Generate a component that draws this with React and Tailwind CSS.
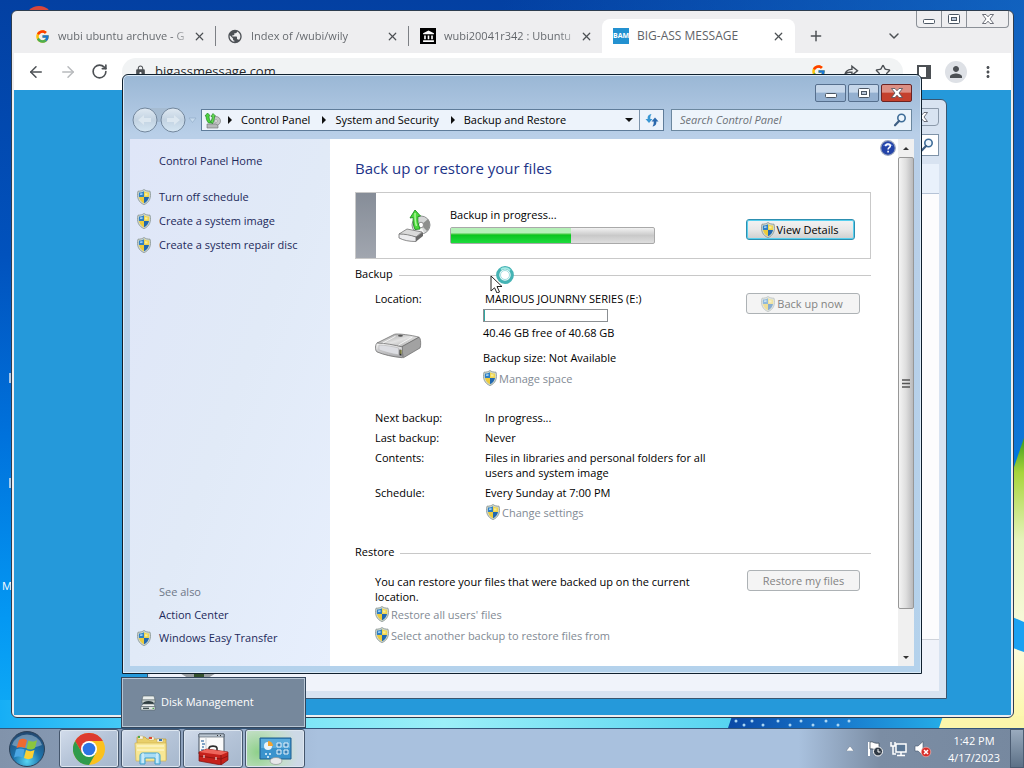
import React from 'react';
import { ArrowLeft, ArrowRight, ChevronDown, Plus, RotateCw, Star, X } from 'lucide-react';
import { MdAccountBalance, MdLock, MdMoreVert, MdPerson, MdPublic } from 'react-icons/md';
import { FcGoogle } from 'react-icons/fc';
import { RiShareForwardLine } from 'react-icons/ri';

const tabs = [
  { title: 'wubi ubuntu archuve - G', icon: <FcGoogle size={15} /> },
  { title: 'Index of /wubi/wily', icon: <MdPublic size={17} className="text-[#4d5156]" /> },
  {
    title: 'wubi20041r342 : Ubuntu',
    icon: (
      <span className="flex h-4 w-4 items-center justify-center bg-black text-white">
        <MdAccountBalance size={13} />
      </span>
    ),
  },
];

const tasks = ['Turn off schedule', 'Create a system image', 'Create a system repair disc'];

const crumbs = ['Control Panel', 'System and Security', 'Backup and Restore'];

const Shield = ({ className = '' }) => (
  <svg viewBox="0 0 14 16" className={`h-4 w-[14px] shrink-0 ${className}`}>
    <path d="M7 .5C8.500 1.700 10.500 2.200 13 2.200 13.800 5 13.700 8 12.600 10.500 11.400 13 9.500 14.600 7 15.600 4.500 14.600 2.600 13 1.400 10.500 .3 8 .2 5 1 2.200 3.500 2.200 5.500 1.700 7 .5Z" fill="#d3dbcf" stroke="#84908f" strokeWidth=".8" />
    <path d="M7 2.200V8H2C1.700 6.500 1.700 5 2 3.600 4 3.500 5.500 3.100 7 2.200Z" fill="#2f7fc4" />
    <path d="M7 2.200V8h5c.3-1.500.3-3 0-4.400C10 3.500 8.500 3.100 7 2.200Z" fill="#f0d64e" />
    <path d="M2 8h5v6.200C4.300 13 2.600 11 2 8Z" fill="#eccb3c" />
    <path d="M12 8H7v6.200C9.700 13 11.400 11 12 8Z" fill="#2168b0" />
    <path d="M3 4.500 5.500 4V6H3Z" fill="#9bcdf2" />
    <path d="M8 4.200 10.500 4.600V6.500H8Z" fill="#f8ec9b" />
  </svg>
);

const Wallpaper = () => (
  <svg className="absolute inset-0 h-full w-full" viewBox="0 0 1024 728" preserveAspectRatio="none">
    <defs>
      <linearGradient id="sky" x1="0" y1="0" x2="0" y2="1">
        <stop offset="0" stopColor="#0340a2" />
        <stop offset=".35" stopColor="#0152bd" />
        <stop offset=".6" stopColor="#0072dc" />
        <stop offset=".85" stopColor="#0498f3" />
        <stop offset="1" stopColor="#10acf6" />
      </linearGradient>
      <linearGradient id="glow" x1="0" y1="0" x2="1" y2="0">
        <stop offset="0" stopColor="#16aef5" />
        <stop offset=".3" stopColor="#6ce0f6" />
        <stop offset=".6" stopColor="#9beff8" />
        <stop offset="1" stopColor="#54d3f0" />
      </linearGradient>
      <linearGradient id="leaf" x1="0" y1="0" x2="0" y2="1">
        <stop offset="0" stopColor="#3f9c1d" />
        <stop offset=".12" stopColor="#a7d53c" />
        <stop offset=".35" stopColor="#e6f3bb" />
        <stop offset=".7" stopColor="#fbfbe0" />
        <stop offset="1" stopColor="#fdf7a5" />
      </linearGradient>
      <linearGradient id="band" x1="0" y1="0" x2="1" y2="0">
        <stop offset="0" stopColor="#0a49a6" />
        <stop offset=".5" stopColor="#1878cc" />
        <stop offset="1" stopColor="#25aee8" />
      </linearGradient>
      <linearGradient id="edge" x1="0" y1="0" x2="1" y2="0">
        <stop offset="0" stopColor="#1a78d2" stopOpacity="0" />
        <stop offset="1" stopColor="#1a78d2" stopOpacity=".6" />
      </linearGradient>
    </defs>
    <rect width="1024" height="728" fill="url(#sky)" />
    <rect x="500" y="0" width="524" height="450" fill="url(#edge)" />
    <rect y="700" width="740" height="28" fill="url(#glow)" />
    <path d="M732 716H946L940 728H728Z" fill="url(#band)" />
    {[736, 744, 752, 763, 778, 790, 801, 813, 826, 838, 849].map((x, i) => (
      <circle key={x} cx={x} cy={i % 2 ? 725 : 721} r="1.500" fill="#a9d5f4" />
    ))}
    <path d="M1024 438 1013 470 1000 728H1024Z" fill="url(#leaf)" />
    <path d="M943 716H1024V728H939Z" fill="#fbf6ab" />
    <path d="M1010 616 1024 622V652L1010 647Z" fill="#1ba1f2" />
    <circle cx="39" cy="20" r="14" fill="#d9473c" />
    <path d="M10 373v10M10 478v10" stroke="#dbe6f2" strokeWidth="1.500" />
  </svg>
);

const MinimizeGlyph = () => (
  <svg viewBox="0 0 14 12" className="h-3 w-[14px]">
    <rect x="1.500" y="6.500" width="11" height="4" rx="1" fill="#fff" stroke="#4b5663" />
  </svg>
);

const MaximizeGlyph = () => (
  <svg viewBox="0 0 14 12" className="h-3 w-[14px]">
    <rect x="1.500" y="1.500" width="11" height="9" rx="1" fill="#fff" stroke="#4b5663" />
    <rect x="4.500" y="4.500" width="5" height="3" fill="#b9c6d8" stroke="#4b5663" />
  </svg>
);

const CloseGlyph = () => (
  <svg viewBox="0 0 14 12" className="h-3 w-[14px]">
    <path
      d="M1.500 1.500H5L7 3.800 9 1.500h3.500L9 6l3.500 4.500H9L7 8.200 5 10.500H1.500L5 6Z"
      fill="#fff"
      stroke="#4b4f5a"
      strokeWidth=".8"
    />
  </svg>
);

const ChromeWindow = () => (
  <section className="absolute bottom-[10px] left-[11px] right-[10px] top-[10px] flex flex-col rounded-md border border-[#2d3d50] bg-[#eeeef0] px-[2px] pb-[2px]">
    <header className="flex h-[42px] shrink-0 items-end">
      <div className="flex h-[34px] min-w-0 flex-1 items-stretch pl-[9px]">
        {tabs.map((tab, index) => (
          <div key={tab.title} className="flex w-[193px] items-center">
            <div className={`flex h-5 w-full items-center pl-[11px] pr-[9px] ${index < 2 ? 'border-r border-[#7d8085]' : ''}`}>
              <span className="flex w-4 shrink-0 justify-center">{tab.icon}</span>
              <span className="ml-2 flex-1 whitespace-nowrap bg-gradient-to-r from-[#5f6368] from-85% to-transparent bg-clip-text text-transparent">
                {tab.title}
              </span>
              <button aria-label="Close tab" className="text-[#4c5054]">
                <X size={13} strokeWidth={2.2} />
              </button>
            </div>
          </div>
        ))}
        <div className="flex w-[193px] items-center rounded-t-lg bg-white pl-[11px] pr-[10px]">
          <span className="flex h-4 w-4 items-center justify-center bg-[#2391d0] text-[7px] font-bold text-white">BAM</span>
          <span className="ml-2 flex-1 whitespace-nowrap text-xs text-[#5f6368]">BIG-ASS MESSAGE</span>
          <button aria-label="Close tab" className="text-[#4c5054]">
            <X size={13} strokeWidth={2.2} />
          </button>
        </div>
        <button aria-label="New tab" className="ml-[13px] text-[#4c5054]">
          <Plus size={16} strokeWidth={2.2} />
        </button>
      </div>
      <button aria-label="Search tabs" className="mr-[109px] flex h-[34px] items-center text-[#4c5054]">
        <ChevronDown size={16} strokeWidth={2.2} />
      </button>
      <div className="absolute right-1 top-0 flex h-[17px] rounded-b border border-t-0 border-[#8b9097]">
        <button aria-label="Minimize" className="flex w-[25px] items-center justify-center border-r border-[#8b9097]"><MinimizeGlyph /></button>
        <button aria-label="Maximize" className="flex w-[25px] items-center justify-center border-r border-[#8b9097]"><MaximizeGlyph /></button>
        <button aria-label="Close" className="flex w-[41px] items-center justify-center"><CloseGlyph /></button>
      </div>
    </header>
    <nav className="flex h-[37px] shrink-0 items-center bg-white text-[#4c5054]">
      <button aria-label="Back" className="ml-[13px]"><ArrowLeft size={18} /></button>
      <button aria-label="Forward" className="ml-[14px] text-[#b8babd]"><ArrowRight size={18} /></button>
      <button aria-label="Reload" className="ml-[14px]"><RotateCw size={17} strokeWidth={2.3} /></button>
      <div className="ml-[14px] flex h-7 flex-1 items-center rounded-full bg-[#f1f3f4] pl-3 pr-3">
        <MdLock size={13} />
        <input aria-label="Address" defaultValue="bigassmessage.com" className="ml-2 min-w-0 flex-1 bg-transparent text-[13px] text-[#26292d] outline-none" />
        <FcGoogle size={15} />
        <RiShareForwardLine size={17} className="ml-4" />
        <Star size={16} className="ml-4" />
      </div>
      <svg viewBox="0 0 14 14" className="ml-[14px] h-[14px] w-[14px]">
        <path d="M1 1H13V13H1Z" fill="#fff" stroke="#4c5054" strokeWidth="2" />
        <path d="M9 1h4v12H9Z" fill="#4c5054" />
      </svg>
      <span className="ml-[14px] flex h-[22px] w-[22px] items-center justify-center rounded-full bg-[#dee1e6]">
        <MdPerson size={18} />
      </span>
      <button aria-label="Menu" className="ml-3 mr-[14px]"><MdMoreVert size={18} /></button>
    </nav>
    <div className="flex-1 bg-[#2599da]" />
  </section>
);

const SearchGlyph = () => (
  <svg viewBox="0 0 14 14" className="h-[14px] w-[14px] shrink-0">
    <circle cx="8.500" cy="5" r="3.700" fill="#eef6fd" stroke="#3f6d98" strokeWidth="1.600" />
    <path d="M6 8 2 12.300" stroke="#3f5f84" strokeWidth="2.200" strokeLinecap="round" />
  </svg>
);

const BackWindow = () => (
  <section className="absolute bottom-[29px] left-[147px] right-[77px] top-[99px] flex flex-col rounded-t-md border border-[#3a5670] bg-[#d8e3f1] pb-[7px] pl-[2px] pr-[7px]">
    <div className="mt-2 flex h-[18px] shrink-0 justify-end">
      <span className="flex w-12 items-center justify-end rounded-b border border-[#8b99aa] pr-[9px]"><CloseGlyph /></span>
    </div>
    <div className="mt-2 flex h-[22px] shrink-0 justify-end">
      <span className="flex w-60 items-center justify-end border border-[#7f93a8] bg-white pr-1"><SearchGlyph /></span>
    </div>
    <div className="mt-2 h-[30px] shrink-0 border-b border-[#b5c3d6] bg-[#e9f1fb]" />
    <div className="flex-1 bg-[#fcfcfd]" />
    <div className="h-[52px] shrink-0 border-t border-[#cfd3da] bg-[#f0f3fa]">
      <svg viewBox="0 0 40 46" className="ml-7 h-[46px] w-10">
        <path d="M0 32h40L30 38H10Z" fill="#9a9fa2" />
        <path d="M16 33h10v4H16Z" fill="#33502d" />
      </svg>
    </div>
  </section>
);

const NavOrbs = () => (
  <svg viewBox="0 0 66 26" className="h-[26px] w-[66px] shrink-0">
    <defs>
      <linearGradient id="orb" x1="0" y1="0" x2="0" y2="1">
        <stop offset="0" stopColor="#dfe9f2" />
        <stop offset=".5" stopColor="#c3d3e2" />
        <stop offset="1" stopColor="#d5e6f3" />
      </linearGradient>
    </defs>
    <rect x="8" y="1" width="40" height="14" fill="#a6bcd2" />
    <circle cx="13" cy="13" r="12" fill="url(#orb)" stroke="#73879d" />
    <circle cx="41" cy="13" r="12" fill="url(#orb)" stroke="#73879d" />
    <path d="m6 13 6-5v3h7v4h-7v3ZM48 13l-6-5v3h-7v4h7v3Z" fill="#dce7f0" />
    <path d="M57 11h7l-3.500 4.500Z" fill="#c6dbee" stroke="#94aec8" strokeWidth=".7" />
  </svg>
);

const Drive = ({ className = '' }) => (
  <svg viewBox="0 0 48 28" className={className}>
    <defs>
      <linearGradient id="drive" x1="0" y1="0" x2="1" y2="1">
        <stop offset="0" stopColor="#8c8c8c" />
        <stop offset=".5" stopColor="#e2e2e2" />
        <stop offset="1" stopColor="#9d9d9d" />
      </linearGradient>
      <linearGradient id="driveFront" x1="0" y1="0" x2="0" y2="1">
        <stop offset="0" stopColor="#f6f6f6" />
        <stop offset="1" stopColor="#a5a5a8" />
      </linearGradient>
    </defs>
    <path d="M2 11 20 2c3-1 18 1 25 3l-18 10Z" fill="url(#drive)" stroke="#777" strokeWidth=".8" />
    <path d="M27 15 45 5c2 1 2 9 1 11L29 26Z" fill="#a2a2a2" stroke="#666" strokeWidth=".7" />
    <path d="M2 11c8 0 18 2 26 4v11C18 25 9 23 2 20-.500 18 .500 12 2 11Z" fill="url(#driveFront)" stroke="#707070" strokeWidth=".8" />
    <path d="M4 13c6 0 14 1.500 20 3v7c-7-1-14-3-20-5Z" fill="#dcdde2" stroke="#aaa" strokeWidth=".5" />
    <path d="M25 17.500 27 18v6l-2-.5Z" fill="#2c2c2c" />
    <path d="M26.500 18v4" stroke="#b6b94c" />
    <path d="M8 11 21 4M38 5 24 13" stroke="#f8f8f8" strokeWidth=".9" />
    <ellipse cx="26" cy="3.500" rx="2.500" ry="1" fill="#555" />
  </svg>
);

const BackupDisc = ({ className = '' }) => (
  <svg viewBox="0 0 34 34" className={className}>
    <ellipse cx="23" cy="16" rx="9" ry="9" fill="#d4d6d6" stroke="#8e9091" />
    <path d="M23 16 30 10c3 4 2 9-1 12Z" fill="#8d8f8d" />
    <path d="M23 16 17 23c2 2 6 3 9 1Z" fill="#f3f3f3" />
    <ellipse cx="23" cy="16" rx="2.500" ry="2.800" fill="#fff" stroke="#8c8c8c" />
    <path d="M1 25 9 20l15 3-6 5Z" fill="#dadada" stroke="#777" strokeWidth=".8" />
    <path d="M1 25c6 0 11 1 17 3v4.500c-7 0-12-1-17-3.500Z" fill="#ececee" stroke="#707070" strokeWidth=".8" />
    <path d="m18 28 7-5v4l-7 5.500Z" fill="#686868" />
    <path d="M17 1 22.500 7 20 7.500C19.500 12 20 15 22 20l-5 .5C15 16 15 12 15.200 8.500L12 9Z" fill="#4bd93b" stroke="#1f8d22" strokeWidth=".9" />
    <path d="M17 4c0 5 0 9 1.500 13" fill="none" stroke="#adf79a" strokeWidth="1.500" />
  </svg>
);

const BackupSmall = ({ className = '' }) => (
  <svg viewBox="0 0 17 17" className={className}>
    <circle cx="12" cy="9" r="4.500" fill="#c3c5c6" stroke="#7d7f80" strokeWidth=".7" />
    <circle cx="12" cy="9" r="1.300" fill="#fff" stroke="#777" strokeWidth=".5" />
    <path d="M3 12h9l2 1.500V16H3Z" fill="#b4b7b8" stroke="#6d6f70" strokeWidth=".6" />
    <path d="M3.500 1 6 3.500 5 4c0 3 1 5 3 7H4.500C2.500 8.500 2 6.500 2.200 4.300L1 4Z" fill="#4cd33d" stroke="#22862a" strokeWidth=".7" />
    <path d="M9 1.500 11.500 4l-1 .3c0 2.500-.5 5-2 7.200L6.500 10c1.500-2 1.800-3.500 1.700-5.500L7 4.500Z" fill="#63dc50" stroke="#22862a" strokeWidth=".7" />
  </svg>
);

const Section = ({ title, children }) => (
  <fieldset>
    <legend className="flex w-full items-center gap-[6px] leading-4">
      {title}
      <span className="mt-[2px] h-px flex-1 bg-[#c8c8c8]" />
    </legend>
    {children}
  </fieldset>
);

const TaskLink = ({ children, className = '' }) => (
  <a href="#" className={`flex h-4 items-center text-[#828a94] ${className}`}>
    <Shield className="mr-[2px]" />
    {children}
  </a>
);

const DisabledButton = ({ children, className = '' }) => (
  <button disabled className={`flex h-[21px] items-center justify-center rounded-[3px] border border-[#adb2b5] bg-[#f4f4f4] text-[#838383] ${className}`}>
    {children}
  </button>
);

const Row = ({ label, children }) => (
  <div className="flex">
    <dt className="w-[110px] shrink-0">{label}</dt>
    <dd className="max-w-[240px]">{children}</dd>
  </div>
);

const Sidebar = () => (
  <aside className="flex w-[200px] shrink-0 flex-col bg-gradient-to-br from-[#dfe6f8] via-[#e1eaf7] to-[#e7effd] pb-5 text-[#1d2a5b]">
    <a href="#" className="ml-[29px] mt-[14px] leading-4">Control Panel Home</a>
    <ul className="mt-5 flex flex-col gap-2">
      {tasks.map((task) => (
        <li key={task}>
          <a href="#" className="flex h-4 items-center gap-2 pl-[7px]">
            <Shield />
            {task}
          </a>
        </li>
      ))}
    </ul>
    <div className="mt-auto flex flex-col gap-[7px]">
      <span className="ml-[29px] h-4 leading-4 text-[#6e7888]">See also</span>
      <a href="#" className="ml-[29px] h-4 leading-4">Action Center</a>
      <a href="#" className="flex h-4 items-center gap-2 pl-[7px]">
        <Shield />
        Windows Easy Transfer
      </a>
    </div>
  </aside>
);

const Scrollbar = () => (
  <div className="flex w-4 shrink-0 flex-col bg-[#f0f0f0]">
    <button aria-label="Scroll up" className="flex h-[18px] items-center justify-center">
      <svg viewBox="0 0 8 4" className="h-1 w-2"><path d="M1 4h6L4 1Z" fill="#333" /></svg>
    </button>
    <div className="flex flex-1 items-center justify-center rounded-[2px] border border-[#979797] bg-gradient-to-r from-[#f4f4f4] via-[#dedede] to-[#b9b9bb]">
      <svg viewBox="0 0 8 9" className="h-[9px] w-2">
        <path d="M0 1h8M0 4.500h8M0 8h8" stroke="#555" strokeWidth="1.300" />
      </svg>
    </div>
    <div className="h-10 shrink-0" />
    <button aria-label="Scroll down" className="flex h-[17px] items-center justify-center">
      <svg viewBox="0 0 8 4" className="h-1 w-2"><path d="M1 0h6L4 3Z" fill="#333" /></svg>
    </button>
  </div>
);

const BackupContent = () => (
  <main className="min-w-0 flex-1 bg-white pl-[25px] pr-[27px] pt-[17px] leading-[15px] text-black">
    <h1 className="text-[15px] leading-6 text-[#1c3388]">Back up or restore your files</h1>

    <div className="mt-3 flex h-[67px] items-center border border-[#c9c9c9]">
      <div className="h-full w-5 bg-gradient-to-b from-[#868d98] to-[#a1a6af]" />
      <BackupDisc className="ml-[22px] h-[34px] w-[34px]" />
      <div className="ml-[18px]">
        <div id="backup-state" className="leading-4">Backup in progress...</div>
        <div
          role="progressbar"
          aria-labelledby="backup-state"
          className="mt-1 h-[17px] w-[205px] rounded-[2px] border border-[#a9a9a9] bg-gradient-to-b from-[#f2f2f2] via-[#c9c9c9] to-[#dedede]"
        >
          <div className="h-full w-[59%] bg-gradient-to-b from-[#b5f0b8] from-30% via-[#08c41c] via-45% to-[#1cdc3c]" />
        </div>
      </div>
      <button className="ml-auto mr-[15px] mt-2 flex h-[21px] w-[109px] items-center justify-center rounded-[3px] border border-[#2d8fb0] bg-gradient-to-b from-[#f3f3f3] via-[#e8e8e8] to-[#cfcfcf] pr-[2px] shadow-[inset_0_0_0_1px_#58cfee]">
        <Shield className="mr-[2px]" />
        View Details
      </button>
    </div>

    <div className="mt-[7px]">
      <Section title="Backup">
        <div className="flex items-start pl-5 pt-[9px]">
          <div className="w-[108px] shrink-0">
            Location:
            <Drive className="mt-[26px] h-7 w-[47px]" />
          </div>
          <div>
            <div className="pl-[2px]">MARIOUS JOUNRNY SERIES (E:)</div>
            <div className="mt-[3px] flex h-[13px] w-[125px] border border-[#8b8f92]">
              <div className="w-px bg-[#2fa7a2]" />
            </div>
            <div className="mt-[3px]">40.46 GB free of 40.68 GB</div>
            <div className="mt-[10px]">Backup size: Not Available</div>
            <TaskLink className="mt-[5px]">Manage space</TaskLink>
          </div>
          <DisabledButton className="ml-auto mr-[11px] mt-[2px] w-[114px] pr-[2px]">
            <Shield className="mr-[2px] opacity-50" />
            Back up now
          </DisabledButton>
        </div>
        <dl className="flex flex-col gap-[5px] pl-5 pt-6">
          <Row label="Next backup:">In progress...</Row>
          <Row label="Last backup:">Never</Row>
          <Row label="Contents:">Files in libraries and personal folders for all users and system image</Row>
          <Row label="Schedule:">Every Sunday at 7:00 PM</Row>
        </dl>
        <TaskLink className="ml-[131px] mt-1">Change settings</TaskLink>
      </Section>
    </div>

    <div className="mt-6">
      <Section title="Restore">
        <div className="flex items-start pl-5 pt-[10px]">
          <div className="mt-1">
            <p className="max-w-[340px]">You can restore your files that were backed up on the current location.</p>
            <TaskLink className="mt-[2px]">Restore all users&#39; files</TaskLink>
            <TaskLink className="mt-[5px]">Select another backup to restore files from</TaskLink>
          </div>
          <DisabledButton className="ml-auto mr-[11px] w-[113px] shrink-0">Restore my files</DisabledButton>
        </div>
      </Section>
    </div>
  </main>
);

const BackupWindow = () => (
  <section className="absolute bottom-[54px] left-[122px] right-[102px] top-[74px] flex flex-col rounded-t-md border border-[#10202e] bg-gradient-to-b from-[#9ab7d5] via-[#b9cfe8] via-10% to-[#b4d2ec] px-[7px] pb-[7px] shadow-[inset_0_0_0_1px_#dcebf8]">
    <header className="mt-[9px] flex h-[18px] shrink-0 justify-end gap-[2px] pr-[2px]">
      <button aria-label="Minimize" className="flex w-[31px] items-center justify-center rounded-[2px] border border-[#566f8d] bg-gradient-to-b from-[#c6d7ea] from-45% to-[#94b0d0] to-50%"><MinimizeGlyph /></button>
      <button aria-label="Maximize" className="flex w-[31px] items-center justify-center rounded-[2px] border border-[#566f8d] bg-gradient-to-b from-[#c6d7ea] from-45% to-[#94b0d0] to-50%"><MaximizeGlyph /></button>
      <button aria-label="Close" className="flex w-[31px] items-center justify-center rounded-[2px] border border-[#6b2323] bg-gradient-to-b from-[#dc8f84] from-45% to-[#c4402d] to-50%"><CloseGlyph /></button>
    </header>
    <div className="mb-[5px] mt-1 flex h-7 shrink-0 items-center px-[2px]">
      <NavOrbs />
      <nav className="ml-[3px] flex h-[22px] min-w-0 flex-1 items-center border border-[#5f7c9a] bg-[#edf3fb] text-black">
        <BackupSmall className="ml-[2px] h-[17px] w-[17px]" />
        {crumbs.map((crumb) => (
          <React.Fragment key={crumb}>
            <svg viewBox="0 0 4 8" className="ml-[7px] mr-[9px] h-2 w-1"><path d="M0 0 4 4 0 8Z" fill="#111" /></svg>
            <button className="mr-[5px] whitespace-nowrap">{crumb}</button>
          </React.Fragment>
        ))}
        <button aria-label="Previous locations" className="ml-auto mr-[6px]">
          <svg viewBox="0 0 8 4" className="h-1 w-2"><path d="M0 0h8L4 4Z" fill="#111" /></svg>
        </button>
        <button aria-label="Refresh" className="flex h-full w-6 items-center justify-center border-l border-[#7c93ab]">
          <svg viewBox="0 0 14 14" className="h-[14px] w-[14px]">
            <path d="M6.500 1C3 1.500 2.500 3.500 2.700 6H.5L4 10 7.500 6H5.300C5.200 4 5.500 2.500 6.500 1Z" fill="#3a97d3" />
            <path d="M7.500 13.500C11 13 11.500 11 11.300 8.500h2.200L10 4.500 6.500 8.500h2.200c.1 2-.2 3.500-1.200 5Z" fill="#2b68ad" />
          </svg>
        </button>
      </nav>
      <label className="ml-[7px] flex h-[22px] w-[241px] items-center border border-[#6b879f] bg-[#edf4fb] pl-2 pr-1">
        <input aria-label="Search Control Panel" placeholder="Search Control Panel" className="min-w-0 flex-1 bg-transparent italic outline-none placeholder:text-[#6c7177]" />
        <SearchGlyph />
      </label>
    </div>
    <div className="relative flex min-h-0 flex-1 overflow-hidden">
      <Sidebar />
      <BackupContent />
      <Scrollbar />
      <button aria-label="Help" className="absolute right-[18px] top-[1px]">
        <svg viewBox="0 0 16 16" className="h-4 w-4">
          <circle cx="8" cy="8" r="7.300" fill="#2343a8" stroke="#9aa5bd" strokeWidth="1.200" />
          <path d="M3 6a5.500 4.500 0 0 1 10 0Z" fill="#6f8fdc" />
          <path d="M5.700 6.200C5.700 3.300 10.300 3.300 10.300 6c0 1.700-2.200 1.700-2.200 3.500M8.100 10.800v1.700" fill="none" stroke="#fff" strokeWidth="1.600" />
        </svg>
      </button>
    </div>
  </section>
);

const Cursor = () => (
  <svg viewBox="0 0 28 28" className="absolute left-[489px] top-[265px] h-7 w-7">
    <circle cx="16" cy="10" r="7.300" fill="#f0fbfc" stroke="#45b3b4" strokeWidth="3.200" />
    <path d="M12 4.500a7 7 0 0 1 9 1" fill="none" stroke="#a5e9e4" strokeWidth="2" />
    <circle cx="16" cy="10" r="4.500" fill="#fff" stroke="#8bd6d7" strokeWidth=".8" />
    <path d="M2 11v15l3.500-3.200L8 28l2.500-1L8 21.500h5Z" fill="#fff" stroke="#222" />
  </svg>
);

const ThumbnailPopup = () => (
  <div className="absolute bottom-0 left-[121px] flex h-[51px] w-[185px] items-center border border-[#33465c] bg-[#76889c] pl-[18px] text-white shadow-[inset_0_0_0_1px_#b8c6d4]">
    <svg viewBox="0 0 16 16" className="mr-[5px] h-4 w-4">
      <path d="M3 1h11l1 4H2Z" fill="#e9eeed" stroke="#59646a" strokeWidth=".6" />
      <path d="M2 5h13v3H2Z" fill="#c6cfce" stroke="#59646a" strokeWidth=".6" />
      <path d="M4 7c3-1.500 6-1.500 9 0l1 3H2Z" fill="#2f3d3f" />
      <path d="M3 9h11l1 2.500H1Z" fill="#eef1f0" stroke="#59646a" strokeWidth=".6" />
      <path d="M1 11.500h14V15H1Z" fill="#dfe5e4" stroke="#59646a" strokeWidth=".6" />
      <path d="M3 13.300h6" stroke="#2c3a3c" strokeWidth="1.200" />
      <path d="M12.500 13.300H14" stroke="#4ea84a" strokeWidth="1.300" />
    </svg>
    Disk Management
  </div>
);

const StartOrb = () => (
  <svg viewBox="0 0 38 38" className="h-[38px] w-[38px]">
    <defs>
      <radialGradient id="start" cx=".5" cy=".85" r=".85">
        <stop offset="0" stopColor="#57d5f3" />
        <stop offset=".45" stopColor="#1d74ad" />
        <stop offset="1" stopColor="#23466d" />
      </radialGradient>
    </defs>
    <circle cx="19" cy="19" r="17.500" fill="url(#start)" stroke="#2c4057" />
    <path d="M4 15a15.500 14 0 0 1 30 0c-9 4-21 4-30 0Z" fill="#b2c9de" opacity=".5" />
    <path d="M11 10c3-2 5-1.500 8 0l-2 8c-3-1.500-5-1.500-8.500 0Z" fill="#ee6a31" />
    <path d="M20.500 10.500c3 1.500 5.500 1.500 8.500-.5l-2 8c-3 2-5.500 2-8.500.5Z" fill="#8bc63f" />
    <path d="M8 19.500c3-1.500 5.500-1.500 8.500 0l-2 8c-3-1.500-5.500-1.500-8.500 0Z" fill="#4ba7e4" />
    <path d="M18 20c3 1.500 5.500 1.500 8.500 0l-2 8c-3 1.500-5.500 1.500-8.500 0Z" fill="#fcd033" />
  </svg>
);

const ChromeLogo = () => (
  <svg viewBox="0 0 32 32" className="h-8 w-8">
    <circle cx="16" cy="16" r="16" fill="#fbc11d" />
    <path d="M2.140 8A16 16 0 0 1 29.860 8H16L9 20Z" fill="#dd3b2f" />
    <path d="M2.140 8A16 16 0 0 0 16 32L22.900 20 9.100 20Z" fill="#2f9b4c" />
    <circle cx="16" cy="16" r="8" fill="#fff" />
    <circle cx="16" cy="16" r="6.300" fill="#2c74e4" />
  </svg>
);

const ExplorerLogo = () => (
  <svg viewBox="0 0 34 32" className="h-8 w-[34px]">
    <path d="M3 4h8l2 2h19v21H3Z" fill="#e9cf6a" stroke="#c29e3d" strokeWidth=".7" />
    <path d="M4 3h5v3H4ZM15 4h5v3h-5ZM23 6h6v3h-6Z" fill="#f9f6e6" stroke="#b9a35a" strokeWidth=".4" />
    <path d="M4 3h2v2H4Z" fill="#4eab4b" />
    <path d="M15 4h3v2h-3Z" fill="#df4931" />
    <path d="M25 6h3v2h-3Z" fill="#3673b5" />
    <path d="M1 10h31v18H2Z" fill="#f7e795" stroke="#d2b452" strokeWidth=".7" />
    <path d="M3 13h27M3 17h27" stroke="#fdf5c4" strokeWidth="1.500" />
    <path d="M6 31V23c0-2 1-3 3-3h14c2 0 3 1 3 3v8h-5v-6H11v6Z" fill="#a8dcf5" stroke="#3d9fcd" />
    <path d="M9 20v10M23 20v10" stroke="#e7f8fd" />
  </svg>
);

const ToolboxLogo = () => (
  <svg viewBox="0 0 32 32" className="h-8 w-8">
    <path d="M2 1h25v20H2Z" fill="#fafafa" stroke="#44515e" />
    <path d="M2 1h25v3H2Z" fill="#bcc7d2" stroke="#44515e" strokeWidth=".6" />
    <path d="M20 2.500h1M23 2.500h1" stroke="#333" />
    <path d="M4 8h3M5 11h3M5 14h2M4 17h3" stroke="#5b87b4" strokeWidth="1.500" />
    <path d="M9 4v17" stroke="#c6ccd2" />
    <path d="M12 17v-2c1-2.500 7-2.500 8 0v3" fill="none" stroke="#2b2b2b" strokeWidth="1.600" />
    <path d="m2 19 8-3 21 3v8l-7 5L2 28Z" fill="#c5211b" stroke="#7b110f" strokeWidth=".7" />
    <path d="m2 19 8-3 21 3-7 3Z" fill="#ee655b" />
    <path d="m2 23 22 3 7-3" fill="none" stroke="#8e1512" />
    <path d="M24 22v10" stroke="#871512" />
    <path d="M7 22v3M19 24v3" stroke="#e8d8d4" strokeWidth="1.200" />
  </svg>
);

const ControlPanelLogo = () => (
  <svg viewBox="0 0 34 32" className="h-8 w-[34px]">
    <path d="M2 5h31v21H2Z" fill="#3a93cd" stroke="#1f5d8f" />
    <path d="M3 6h29v9H3Z" fill="#6fbbe6" opacity=".6" />
    <circle cx="10" cy="13" r="4" fill="#e9f4fb" />
    <path d="M10 13V8a5 5 0 0 1 5 5Z" fill="#f2a431" />
    <path d="M19 10h4v4h-4ZM26 10h4v4h-4ZM19 17h4v4h-4ZM26 17h4v4h-4Z" fill="#3881b9" stroke="#e4f3fc" />
    <path d="M7 21h2M11 21h2M9 24h2" stroke="#e9f7ff" strokeWidth="1.500" />
    <ellipse cx="18" cy="28" rx="6" ry="3.500" fill="#e7e8ea" stroke="#8f9396" strokeWidth=".7" />
  </svg>
);

const apps = [
  { name: 'Google Chrome', icon: <ChromeLogo /> },
  { name: 'Windows Explorer', icon: <ExplorerLogo /> },
  { name: 'Disk Management', icon: <ToolboxLogo /> },
  { name: 'Control Panel', icon: <ControlPanelLogo />, green: true },
];

const Taskbar = () => (
  <footer className="flex h-10 shrink-0 items-stretch border-t border-[#33557a] bg-[linear-gradient(to_right,#8193ab_0%,#8fa3bf_20%,#a9c1de_31%,#a9c1de_78%,#7b8da4_86%,#76889f_100%)]">
    <button aria-label="Start" className="ml-2 mr-[13px] flex items-center"><StartOrb /></button>
    <div className="flex gap-[2px]">
      {apps.map((app) => (
        <button
          key={app.name}
          aria-label={app.name}
          className={`flex w-[60px] items-center justify-center rounded-[3px] border border-[#45566c] shadow-[inset_0_0_0_1px_#dde6f0] ${
            app.green
              ? 'bg-[radial-gradient(circle_at_20%_60%,#8fd08a,#c3dfc6_45%,#cdd9e6_80%)]'
              : 'bg-gradient-to-br from-[#d2dceb] via-[#b5c4d8] to-[#a7b8cd]'
          }`}
        >
          {app.icon}
        </button>
      ))}
    </div>
    <div className="ml-auto flex items-center text-white">
      <svg viewBox="0 0 8 5" className="h-[5px] w-2"><path d="M0 5h8L4 0Z" fill="#fff" stroke="#4f6177" strokeWidth=".4" /></svg>
      <svg viewBox="0 0 18 18" className="ml-3 h-[18px] w-[18px]">
        <path d="M3 2v14" stroke="#fff" strokeWidth="2" />
        <path d="M4 2c3-1 4 2 9 1v7c-4 1-6-2-9-1Z" fill="#fff" stroke="#2f3d4c" strokeWidth=".7" />
        <circle cx="12" cy="11.500" r="4.500" fill="#303a45" stroke="#fff" />
        <path d="M12 9v3h2.500" fill="none" stroke="#fff" />
      </svg>
      <svg viewBox="0 0 18 18" className="ml-[6px] h-[18px] w-[18px]">
        <path d="M6 4h10v8H6Z" fill="#5b7795" stroke="#fff" strokeWidth="1.500" />
        <path d="M11 12v3M7 15.500h8" stroke="#fff" strokeWidth="1.500" />
        <path d="M1 2v4h4V2M3 6v8h3" fill="none" stroke="#fff" strokeWidth="1.500" />
      </svg>
      <svg viewBox="0 0 18 18" className="ml-[6px] h-[18px] w-[18px]">
        <path d="M1 6h3l5-4.500v14L4 11H1Z" fill="#fff" stroke="#44566b" strokeWidth=".6" />
        <circle cx="12" cy="12" r="4.800" fill="#d92e2a" stroke="#f2c3bf" strokeWidth=".6" />
        <path d="m10 10 4 4m0-4-4 4" stroke="#fff" strokeWidth="1.500" />
      </svg>
      <time className="ml-[14px] w-14 whitespace-nowrap text-center leading-[17px]">
        1:42 PM
        <br />
        4/17/2023
      </time>
    </div>
    <button aria-label="Show desktop" className="ml-2 w-[14px] border border-[#4b5c72] bg-gradient-to-b from-[#9aabbe] to-[#5d7187]" />
  </footer>
);

const App = () => (
  <div className="flex h-screen w-full flex-col overflow-hidden font-['Open_Sans','Noto_Sans',sans-serif] text-[11px]">
    <div className="relative flex-1 overflow-hidden">
      <Wallpaper />
      <span className="absolute left-[2px] top-[578px] text-white">M</span>
      <ChromeWindow />
      <BackWindow />
      <BackupWindow />
      <ThumbnailPopup />
      <Cursor />
    </div>
    <Taskbar />
  </div>
);

export default App;
